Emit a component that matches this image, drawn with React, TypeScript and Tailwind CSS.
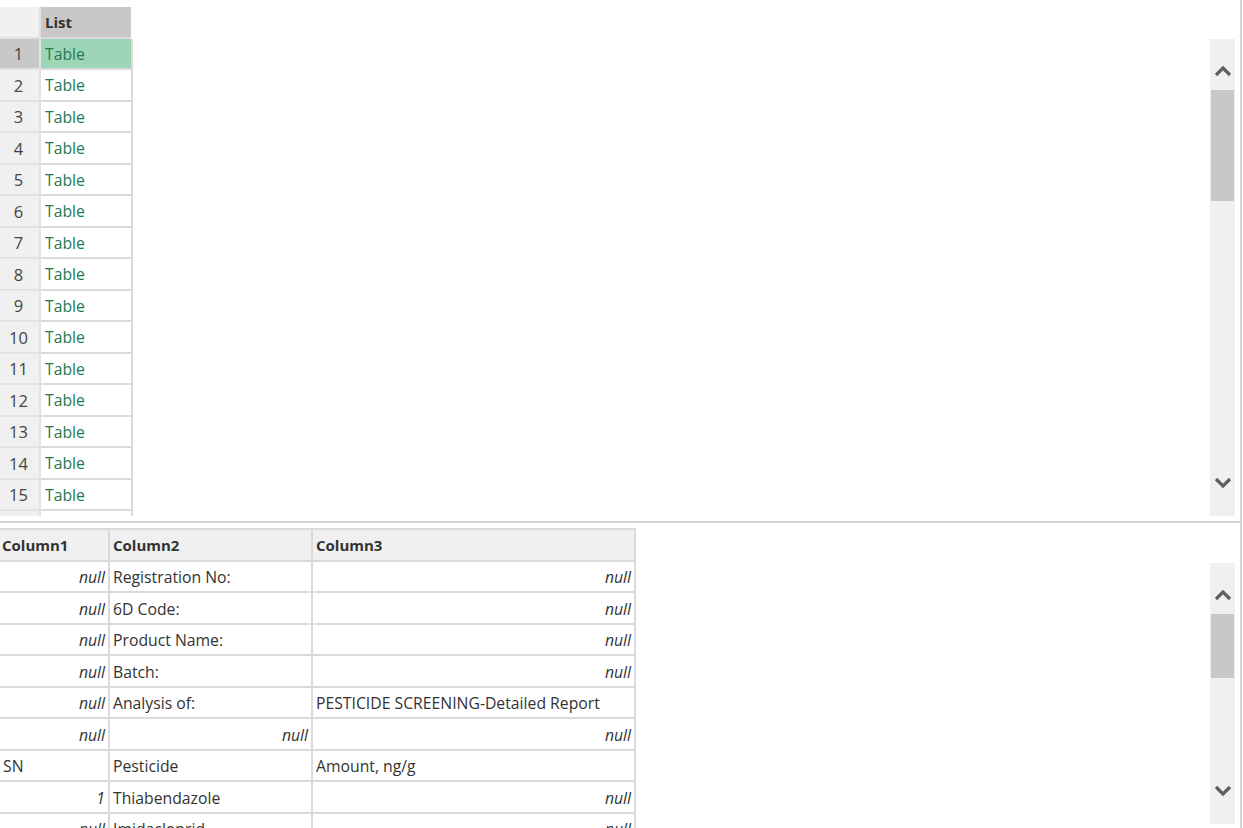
import React from "react";

const font = { fontFamily: '"Segoe UI", "Open Sans", "Noto Sans", sans-serif' };

function ChevronUp() {
  return (
    <svg width="18" height="12" viewBox="0 0 18 12">
      <polyline points="2,10 9,3 16,10" fill="none" stroke="#5f5f5f" strokeWidth="3.2" />
    </svg>
  );
}
function ChevronDown() {
  return (
    <svg width="18" height="12" viewBox="0 0 18 12">
      <polyline points="2,2 9,9 16,2" fill="none" stroke="#5f5f5f" strokeWidth="3.2" />
    </svg>
  );
}

function Scrollbar({ height, thumb }: { height: string; thumb: string }) {
  return (
    <div className={`w-[25px] ${height} bg-[#f0f0f0] flex flex-col items-center shrink-0`}>
      <div className="h-[51px] w-full flex items-start justify-center pt-[26px]">
        <ChevronUp />
      </div>
      <div className={`w-[23px] ${thumb} bg-[#c8c8c8]`} />
      <div className="flex-1" />
      <div className="h-[66px] w-full flex items-end justify-center pb-[27px]">
        <ChevronDown />
      </div>
    </div>
  );
}

const lowerRows: [string, boolean, string, boolean, string, boolean][] = [
  ["null", true, "Registration No:", false, "null", true],
  ["null", true, "6D Code:", false, "null", true],
  ["null", true, "Product Name:", false, "null", true],
  ["null", true, "Batch:", false, "null", true],
  ["null", true, "Analysis of:", false, "PESTICIDE SCREENING-Detailed Report", false],
  ["null", true, "null", true, "null", true],
  ["SN", false, "Pesticide", false, "Amount, ng/g", false],
  ["1", true, "Thiabendazole", false, "null", true],
  ["null", true, "Imidacloprid", false, "null", true],
  ["null", true, "Carbendazim", false, "null", true],
];

function LowerCell({ text, nullish, width }: { text: string; nullish: boolean; width: string }) {
  return (
    <div
      className={`${width} shrink-0 border-r-2 border-[#dadada] flex items-center px-[3px] pt-[3px] text-[15.75px] text-[#333333] whitespace-nowrap ${
        nullish ? "justify-end italic" : "justify-start"
      }`}
    >
      {text}
    </div>
  );
}

export default function App() {
  const rows = Array.from({ length: 16 }, (_, i) => i + 1);
  return (
    <div className="w-[1243px] h-[828px] overflow-hidden bg-white" style={font}>
      <div className="w-[1242px] h-[828px] border-r-2 border-[#d4d4d4] flex flex-col">
        {/* upper panel */}
        <div className="h-[523px] shrink-0 border-b-2 border-[#d4d4d4] flex">
          <div className="flex-1 h-[516px] overflow-hidden pt-[7px]">
            <div className="w-[133px]">
              <div className="flex h-[32px]">
                <div className="w-[41px] bg-[#f0f0f0] border-r-2 border-b-2 border-[#e2e2e2]" />
                <div className="w-[90px] bg-[#c8c8c8] border-b-2 border-[#dadada] flex items-center px-[4px] pt-[1px] text-[15px] font-bold text-[#333333]">
                  List
                </div>
              </div>
              {rows.map((n, i) => (
                <div key={n} className={`flex ${i % 2 === 0 ? "h-[31px]" : "h-[32px]"}`}>
                  <div
                    className={`w-[41px] border-r-2 border-b-2 border-[#e2e2e2] flex items-center justify-center pr-[2px] pt-[2px] text-[16.5px] text-[#444444] ${
                      n === 1 ? "bg-[#c8c8c8]" : "bg-[#f0f0f0]"
                    }`}
                  >
                    {n}
                  </div>
                  <div
                    className={`w-[92px] border-r-2 border-b-2 border-[#dadada] flex items-center px-[4px] pt-[2px] text-[15.75px] text-[#1f7a4f] ${
                      n === 1 ? "bg-[#9fd5b7]" : "bg-white"
                    }`}
                  >
                    Table
                  </div>
                </div>
              ))}
            </div>
          </div>
          <div className="pt-[39px] pr-[5px]">
            <Scrollbar height="h-[477px]" thumb="h-[111px]" />
          </div>
        </div>
        {/* lower panel */}
        <div className="flex-1 flex overflow-hidden">
          <div className="flex-1 overflow-hidden pt-[5px]">
            <div className="w-[636px] border-t-2 border-[#dadada]">
              <div className="flex h-[32px] bg-[#f0f0f0] border-b-2 border-[#dadada]">
                <div className="w-[110px] border-r-2 border-[#dadada] flex items-center px-[2px] pt-[1px] text-[15px] font-bold text-[#333333]">
                  Column1
                </div>
                <div className="w-[203px] border-r-2 border-[#dadada] flex items-center px-[3px] pt-[1px] text-[15px] font-bold text-[#333333]">
                  Column2
                </div>
                <div className="w-[323px] border-r-2 border-[#dadada] flex items-center px-[3px] pt-[1px] text-[15px] font-bold text-[#333333]">
                  Column3
                </div>
              </div>
              {lowerRows.map((r, i) => (
                <div key={i} className={`flex border-b-2 border-[#dadada] ${i % 2 === 0 ? "h-[31px]" : "h-[32px]"}`}>
                  <LowerCell text={r[0]} nullish={r[1]} width="w-[110px]" />
                  <LowerCell text={r[2]} nullish={r[3]} width="w-[203px]" />
                  <LowerCell text={r[4]} nullish={r[5]} width="w-[323px]" />
                </div>
              ))}
            </div>
          </div>
          <div className="pt-[40px] pr-[5px]">
            <Scrollbar height="h-[261px]" thumb="h-[64px]" />
          </div>
        </div>
      </div>
    </div>
  );
}
